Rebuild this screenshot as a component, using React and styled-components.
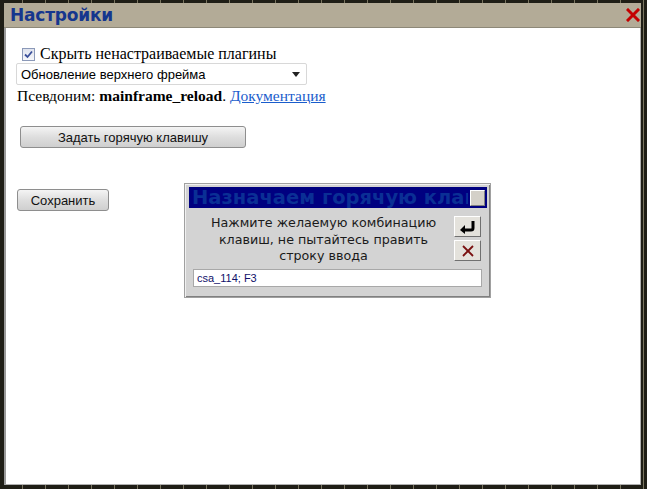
import styled, { createGlobalStyle } from 'styled-components';

const Global = createGlobalStyle`
  html, body { margin: 0; padding: 0; }
  body { width: 647px; height: 489px; overflow: hidden; background: #1c1c14; }
`;

const Frame = styled.div`
  box-sizing: border-box;
  width: 647px;
  height: 489px;
  padding: 3px 6px 4px 4px;
  display: flex;
  flex-direction: column;
  background:
    repeating-linear-gradient(90deg, transparent 0 22px, #7a7560 22px 23px),
    #1f1e16;
`;

const TitleBar = styled.div`
  height: 24px;
  background: #b3ab97;
  border-bottom: 1px solid #8d8878;
  display: flex;
  align-items: center;
  justify-content: space-between;
  padding: 0 1px 0 6px;
`;

const Title = styled.div`
  font-family: "DejaVu Sans", sans-serif;
  font-weight: bold;
  font-size: 17px;
  color: #15368e;
  letter-spacing: -0.2px;
`;

const Content = styled.div`
  flex: 1;
  position: relative;
  background: #fff;
  border-left: 2px solid #9a9a9a;
  border-right: 1px solid #b0b0b0;
  border-bottom: 1px solid #b0b0b0;
  padding: 17px 0 0 10px;
`;

const CheckRow = styled.label`
  display: flex;
  align-items: center;
  gap: 5px;
  margin-left: 6px;
  font-family: "Liberation Serif", serif;
  font-size: 16px;
  color: #000;
  height: 18px;
`;

const Check = styled.span`
  box-sizing: border-box;
  width: 13px;
  height: 13px;
  border: 1px solid #8b99b8;
  background: linear-gradient(#dfe3ee, #f6f7fa);
  display: flex;
  align-items: center;
  justify-content: center;
`;

const Select = styled.div`
  box-sizing: border-box;
  width: 291px;
  height: 22px;
  border: 1px solid #d8d8d8;
  border-radius: 2px;
  display: flex;
  align-items: center;
  justify-content: space-between;
  padding: 0 6px 0 4px;
  font-family: "Liberation Sans", sans-serif;
  font-size: 13px;
  color: #000;
`;

const Arrow = styled.span`
  width: 0;
  height: 0;
  border-left: 4px solid transparent;
  border-right: 4px solid transparent;
  border-top: 5px solid #222;
`;

const Alias = styled.div`
  font-family: "Liberation Serif", serif;
  font-size: 15.5px;
  margin-top: 2px;
  margin-left: 1px;
  line-height: 18px;
  b { font-weight: bold; }
  a { color: #1a5dcc; text-decoration: underline; }
`;

const Button = styled.div`
  box-sizing: border-box;
  width: ${p => p.w}px;
  height: 22px;
  margin-left: ${p => p.ml}px;
  margin-top: ${p => p.mt}px;
  border: 1px solid #8e8e8e;
  border-radius: 3px;
  background: linear-gradient(#f4f4f4, #dedede 50%, #cfcfcf);
  display: flex;
  align-items: center;
  justify-content: center;
  font-family: "Liberation Sans", sans-serif;
  font-size: 13px;
  color: #111;
`;

const Dialog = styled.div`
  position: absolute;
  left: 178px;
  top: 155px;
  box-sizing: border-box;
  width: 307px;
  height: 115px;
  background: #d3d3d3;
  border: 1px solid #a0a0a0;
  box-shadow: inset 1px 1px 0 #f0f0f0, inset -1px -1px 0 #808080;
  padding: 3px 3px 0 4px;
`;

const DlgTitle = styled.div`
  height: 21px;
  background: #000080;
  display: flex;
  align-items: center;
  justify-content: space-between;
  overflow: hidden;
  padding: 0 2px 0 3px;
  font-family: "DejaVu Sans", sans-serif;
  font-weight: bold;
  font-size: 19.5px;
  color: #0a2f95;
  white-space: nowrap;
`;

const TitleClip = styled.span`
  width: 276px;
  overflow: hidden;
`;

const SqBtn = styled.span`
  flex: none;
  box-sizing: border-box;
  width: 15px;
  height: 16px;
  background: #d4d0c8;
  border: 1px solid;
  border-color: #fff #808080 #808080 #fff;
`;

const DlgBody = styled.div`
  display: flex;
  align-items: flex-start;
  padding: 6px 6px 0 4px;
`;

const DlgText = styled.div`
  flex: 1;
  text-align: center;
  font-family: "DejaVu Sans", sans-serif;
  font-size: 12.7px;
  line-height: 16.5px;
  color: #1a1a1a;
  padding-top: 1px;
`;

const BtnCol = styled.div`
  display: flex;
  flex-direction: column;
  gap: 3px;
  padding-top: 2px;
`;

const IconBtn = styled.span`
  box-sizing: border-box;
  width: 27px;
  height: 21px;
  background: #e4e2dc;
  border: 1px solid;
  border-color: #fff #707070 #707070 #fff;
  display: flex;
  align-items: center;
  justify-content: center;
`;

const Input = styled.div`
  box-sizing: border-box;
  margin: 4px 5px 0 4px;
  height: 18px;
  background: #fff;
  border: 1px solid #a8a8a8;
  padding-left: 3px;
  display: flex;
  align-items: center;
  font-family: "Liberation Sans", sans-serif;
  font-size: 11px;
  color: #10106a;
`;

export default function App() {
  return (
    <>
      <Global />
      <Frame>
        <TitleBar>
          <Title>Настройки</Title>
          <svg width="14" height="14" viewBox="0 0 14 14">
            <path d="M2 2 L12 12 M12 2 L2 12" stroke="#c40000" strokeWidth="3" strokeLinecap="square" />
          </svg>
        </TitleBar>
        <Content>
          <CheckRow>
            <Check>
              <svg width="9" height="9" viewBox="0 0 9 9">
                <path d="M1 4.5 L3.5 7 L8 1.5" stroke="#3a4f9a" strokeWidth="1.8" fill="none" />
              </svg>
            </Check>
            Скрыть ненастраиваемые плагины
          </CheckRow>
          <Select>
            <span>Обновление верхнего фрейма</span>
            <Arrow />
          </Select>
          <Alias>
            Псевдоним: <b>mainframe_reload</b>. <a>Документация</a>
          </Alias>
          <Button w={226} ml={4} mt={21}>Задать горячую клавишу</Button>
          <Button w={92} ml={1} mt={41}>Сохранить</Button>
          <Dialog>
            <DlgTitle>
              <TitleClip>Назначаем горячую клавишу</TitleClip>
              <SqBtn />
            </DlgTitle>
            <DlgBody>
              <DlgText>
                Нажмите желаемую комбинацию<br />
                клавиш, не пытайтесь править<br />
                строку ввода
              </DlgText>
              <BtnCol>
                <IconBtn>
                  <svg width="18" height="14" viewBox="0 0 18 14">
                    <path d="M14 1 L14 8 Q14 10 12 10 L5 10" stroke="#000" strokeWidth="3" fill="none" />
                    <path d="M1 10 L6 5 L6 14 Z" fill="#000" />
                  </svg>
                </IconBtn>
                <IconBtn>
                  <svg width="14" height="14" viewBox="0 0 14 14">
                    <path d="M2 2 L12 12 M12 2 L2 12" stroke="#7a1010" strokeWidth="1.8" />
                  </svg>
                </IconBtn>
              </BtnCol>
            </DlgBody>
            <Input>csa_114; F3</Input>
          </Dialog>
        </Content>
      </Frame>
    </>
  );
}
